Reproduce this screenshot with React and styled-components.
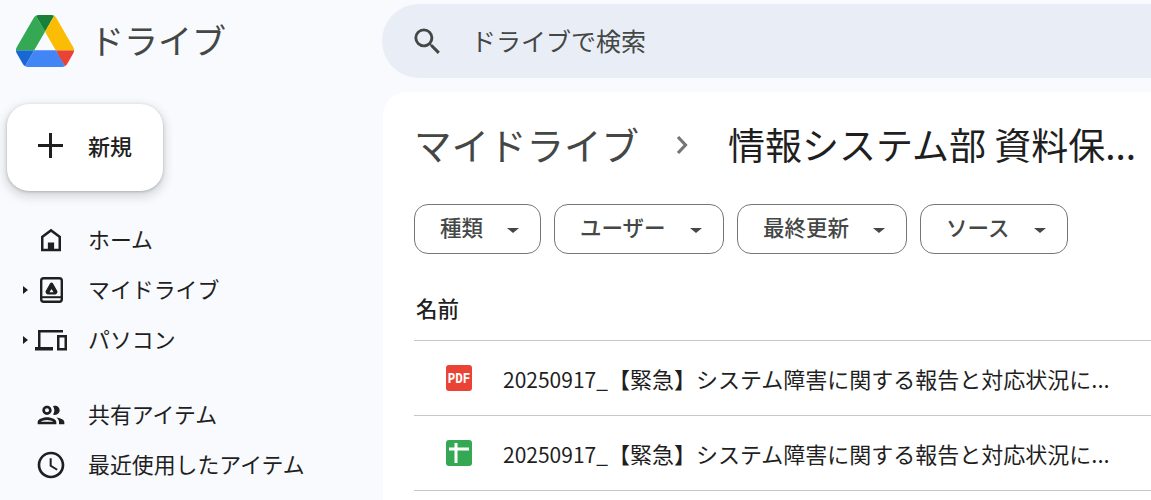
import React from 'react';
import styled, { createGlobalStyle } from 'styled-components';

const GlobalStyle = createGlobalStyle`
  html, body {
    margin: 0;
    height: 500px;
    overflow: hidden;
    background: #f8fafd;
    font-family: "Noto Sans CJK JP", "Roboto", sans-serif;
    color: #1f1f1f;
  }
`;

const Page = styled.div`
  width: 1151px;
  height: 500px;
  overflow: hidden;
  display: grid;
  grid-template-columns: 383px 1fr;
  grid-template-rows: 92px 1fr;
  background: #f8fafd;
`;

const Brand = styled.div`
  display: flex;
  align-items: center;
  height: 82px;
  padding-left: 15px;
  gap: 15px;
  font-size: 34px;
  color: #444746;
`;

const BrandName = styled.span`
  margin-top: -3px;
`;

const SearchArea = styled.div`
  padding-top: 4px;
`;

const SearchBar = styled.div`
  display: flex;
  align-items: center;
  height: 74px;
  margin-left: -1px;
  border-radius: 37px 0 0 37px;
  background: #e9eef6;
  padding-left: 28px;
  gap: 26px;
  font-size: 25px;
  color: #444746;
`;

const SearchLabel = styled.span`
  margin-top: -2px;
`;

const Sidebar = styled.nav`
  padding: 12px 0 0 7px;
`;

const NewButton = styled.div`
  display: flex;
  align-items: center;
  width: 156px;
  height: 87px;
  border-radius: 22px;
  background: #fff;
  box-shadow: 0 1px 3px rgba(60, 64, 67, 0.3), 0 4px 8px 3px rgba(60, 64, 67, 0.15);
  padding-left: 31px;
  box-sizing: border-box;
  gap: 25px;
  font-size: 22px;
  font-weight: 500;
  margin-bottom: 24px;
`;

const NewLabel = styled.span`
  margin-top: -6px;
`;

const PlusGlyph = styled.svg`
  margin-top: -4px;
  fill: #1f1f1f;
`;

const NavGroup = styled.div`
  margin-bottom: ${p => p.$gap || 0}px;
`;

const NavRow = styled.div`
  position: relative;
  display: flex;
  align-items: center;
  height: 50px;
  padding-left: 28px;
  gap: 21px;
  font-size: 21.9px;
`;

const NavLabel = styled.span`
  margin-top: -4px;
`;

const Caret = styled.span`
  position: absolute;
  left: 16px;
  top: 21px;
  border-left: 5px solid #1f1f1f;
  border-top: 4.5px solid transparent;
  border-bottom: 4.5px solid transparent;
`;

const IconSlot = styled.span`
  width: 32px;
  height: 32px;
  display: flex;
  align-items: center;
  justify-content: center;
  flex: none;
`;

const Content = styled.main`
  background: #fff;
  border-radius: 24px 0 0 0;
  padding-left: 31px;
  overflow: hidden;
`;

const Breadcrumb = styled.div`
  display: flex;
  align-items: center;
  height: 53px;
  margin-top: 25px;
  font-size: 37px;
  white-space: nowrap;
`;

const Crumb = styled.span`
  color: #444746;
  font-size: 37.5px;
`;

const Current = styled.span`
  color: #1f1f1f;
`;

const Chevron = styled.span`
  width: 92px;
  margin-left: -3px;
  display: flex;
  justify-content: center;
  flex: none;
  margin-top: 3px;
`;

const Filters = styled.div`
  display: flex;
  gap: 13px;
  margin-top: 34px;
`;

const Chip = styled.div`
  display: flex;
  align-items: center;
  justify-content: space-between;
  box-sizing: border-box;
  width: ${p => p.$w}px;
  height: 50px;
  border: 1px solid #747775;
  border-radius: 14px;
  padding: 0 21px 0 25px;
  font-size: 21.5px;
  font-weight: 500;
  color: #444746;
`;

const ChipLabel = styled.span`
  margin-top: -5px;
`;

const Arrow = styled.span`
  border-top: 5.5px solid #444746;
  border-left: 6.5px solid transparent;
  border-right: 6.5px solid transparent;
  margin-top: 2px;
`;

const ListHeader = styled.div`
  display: flex;
  align-items: center;
  height: 87px;
  box-sizing: border-box;
  padding: 20px 0 0 2px;
  font-size: 21.5px;
  font-weight: 500;
  border-bottom: 1px solid #c7c7c7;
`;

const FileRow = styled.div`
  display: flex;
  align-items: center;
  height: 75px;
  box-sizing: border-box;
  padding-left: 32px;
  gap: 31px;
  font-size: 22px;
  border-bottom: 1px solid #c7c7c7;
  white-space: nowrap;
`;

const FileStamp = styled.span`
  font-size: 21px;
`;

const DriveLogo = () => (
  <svg width="60" height="52" viewBox="0 0 87.3 78">
    <path d="m6.6 66.85 3.85 6.65c.8 1.4 1.95 2.5 3.3 3.3l13.75-23.8h-27.5c0 1.55.4 3.1 1.2 4.5z" fill="#1967d2" />
    <path d="m43.65 25-13.75-23.8c-1.35.8-2.5 1.9-3.3 3.3l-25.4 44a9.06 9.06 0 0 0 -1.2 4.5h27.5z" fill="#34a853" />
    <path d="m73.55 76.8c1.35-.8 2.5-1.9 3.3-3.3l1.6-2.75 7.65-13.25c.8-1.4 1.2-2.95 1.2-4.5h-27.502l5.852 11.5z" fill="#ea4335" />
    <path d="m43.65 25 13.75-23.8c-1.35-.8-2.9-1.2-4.5-1.2h-18.5c-1.6 0-3.15.45-4.5 1.2z" fill="#188038" />
    <path d="m59.8 53h-32.3l-13.75 23.8c1.35.8 2.9 1.2 4.5 1.2h50.8c1.6 0 3.15-.45 4.5-1.2z" fill="#4285f4" />
    <path d="m73.4 26.5-12.7-22c-.8-1.4-1.95-2.5-3.3-3.3l-13.75 23.8 16.15 28h27.45c0-1.55-.4-3.1-1.2-4.5z" fill="#fbbc04" />
  </svg>
);

const SearchIcon = () => (
  <svg width="35" height="35" viewBox="0 0 24 24" fill="#444746">
    <path d="M15.5 14h-.79l-.28-.27A6.47 6.47 0 0 0 16 9.5 6.5 6.5 0 1 0 9.5 16c1.61 0 3.09-.59 4.23-1.57l.27.28v.79l5 4.99L20.49 19l-4.99-5zm-6 0C7.01 14 5 11.99 5 9.5S7.01 5 9.5 5 14 7.01 14 9.5 11.99 14 9.5 14z" />
  </svg>
);

const PlusIcon = () => (
  <PlusGlyph width="25" height="25" viewBox="0 0 25 25">
    <path d="M11 0h3v11h11v3H14v11h-3V14H0v-3h11z" />
  </PlusGlyph>
);

const HomeIcon = () => (
  <svg width="30" height="30" viewBox="0 0 24 24" fill="#1f1f1f">
    <path d="M12 3 4 9v12h16V9l-8-6zm6 16h-3.500v-5h-5v5H6v-9l6-4.500 6 4.500v9z" />
  </svg>
);

const MyDriveIcon = () => (
  <svg width="23" height="26" viewBox="0 0 23 26">
    <rect x="1.2" y="1.200" width="20.600" height="23.600" rx="2.500" fill="none" stroke="#1f1f1f" strokeWidth="2.400" />
    <path d="M1 20.200h21" fill="none" stroke="#1f1f1f" strokeWidth="2" />
    <path fillRule="evenodd" d="M11.500 5.500c.6 0 1.100.3 1.400.8l4.400 7.600c.3.5.3 1.100 0 1.600l-.7 1.200c-.3.500-.8.800-1.400.800H7.800c-.6 0-1.100-.3-1.400-.8l-.7-1.200c-.3-.5-.3-1.100 0-1.600l4.400-7.600c.3-.5.8-.8 1.400-.8zm0 6.500-2 3.200h4z" fill="#1f1f1f" />
  </svg>
);

const ComputerIcon = () => (
  <svg width="32" height="21" viewBox="0 0 32 21" fill="#1f1f1f">
    <path d="M3 0h25v2.400H5.500V17H18v3.500H0V17h3z" />
    <path fillRule="evenodd" d="M22 5h10v15.500H22zm2.500 2.500v10.500h5V7.500z" />
  </svg>
);

const PeopleIcon = () => (
  <svg width="32" height="32" viewBox="0 0 24 24" fill="#1f1f1f">
    <path d="M9 13.750c-2.340 0-7 1.170-7 3.500V19h14v-1.750c0-2.330-4.660-3.500-7-3.500zM4.340 17c.84-.58 2.870-1.250 4.660-1.250s3.820.67 4.660 1.250H4.340zM9 12c1.930 0 3.500-1.570 3.500-3.500S10.930 5 9 5 5.500 6.570 5.500 8.500 7.070 12 9 12zm0-5c.83 0 1.500.67 1.500 1.500S9.830 10 9 10s-1.500-.67-1.500-1.500S8.170 7 9 7zm7.040 6.810c1.160.84 1.960 1.960 1.960 3.440V19h4v-1.750c0-2.020-3.500-3.170-5.960-3.440zM15 12c1.930 0 3.500-1.570 3.500-3.500S16.930 5 15 5c-.54 0-1.040.13-1.500.35.63.89 1 1.980 1 3.150s-.37 2.260-1 3.150c.46.22.96.35 1.500.35z" />
  </svg>
);

const ClockIcon = () => (
  <svg width="32" height="32" viewBox="0 0 24 24" fill="#1f1f1f">
    <path d="M11.990 2C6.470 2 2 6.480 2 12s4.470 10 9.990 10C17.520 22 22 17.520 22 12S17.520 2 11.990 2zM12 20c-4.420 0-8-3.580-8-8s3.580-8 8-8 8 3.580 8 8-3.580 8-8 8zm.5-13H11v6l5.250 3.150.75-1.230-4.500-2.670z" />
  </svg>
);

const ChevronIcon = () => (
  <svg width="12" height="20" viewBox="0 0 12 20">
    <path d="M2 2l7.500 8L2 18" fill="none" stroke="#757575" strokeWidth="3.200" />
  </svg>
);

const PdfIcon = () => (
  <svg width="26" height="26" viewBox="0 0 26 26">
    <rect width="26" height="26" rx="3" fill="#ea4335" />
    <text transform="translate(13 17.500) scale(1 1.150)" textAnchor="middle" fontSize="12.500" fontWeight="700" fill="#fff" fontFamily="Liberation Mono, monospace">PDF</text>
  </svg>
);

const SheetIcon = () => (
  <svg width="26" height="26" viewBox="0 0 26 26">
    <rect width="26" height="26" rx="3" fill="#34a853" />
    <path d="M8.500 3h3v4.500H23v3H11.500V23h-3V10.500H3v-3h5.500z" fill="#fff" />
  </svg>
);

const filters = [
  { label: '種類', w: 127 },
  { label: 'ユーザー', w: 170 },
  { label: '最終更新', w: 170 },
  { label: 'ソース', w: 148 },
];

const files = [
  { id: 'pdf', icon: <PdfIcon /> },
  { id: 'sheet', icon: <SheetIcon /> },
];

export default function App() {
  return (
    <Page>
      <GlobalStyle />
      <Brand>
        <DriveLogo />
        <BrandName>ドライブ</BrandName>
      </Brand>
      <SearchArea>
        <SearchBar>
          <SearchIcon />
          <SearchLabel>ドライブで検索</SearchLabel>
        </SearchBar>
      </SearchArea>
      <Sidebar>
        <NewButton>
          <PlusIcon />
          <NewLabel>新規</NewLabel>
        </NewButton>
        <NavGroup $gap={25}>
          <NavRow><IconSlot><HomeIcon /></IconSlot><NavLabel>ホーム</NavLabel></NavRow>
          <NavRow><Caret /><IconSlot><MyDriveIcon /></IconSlot><NavLabel>マイドライブ</NavLabel></NavRow>
          <NavRow><Caret /><IconSlot><ComputerIcon /></IconSlot><NavLabel>パソコン</NavLabel></NavRow>
        </NavGroup>
        <NavGroup>
          <NavRow><IconSlot><PeopleIcon /></IconSlot><NavLabel>共有アイテム</NavLabel></NavRow>
          <NavRow><IconSlot><ClockIcon /></IconSlot><NavLabel>最近使用したアイテム</NavLabel></NavRow>
        </NavGroup>
      </Sidebar>
      <Content>
        <Breadcrumb>
          <Crumb>マイドライブ</Crumb>
          <Chevron><ChevronIcon /></Chevron>
          <Current>情報システム部 資料保...</Current>
        </Breadcrumb>
        <Filters>
          {filters.map(f => (
            <Chip key={f.label} $w={f.w}>
              <ChipLabel>{f.label}</ChipLabel>
              <Arrow />
            </Chip>
          ))}
        </Filters>
        <ListHeader>名前</ListHeader>
        {files.map(f => (
          <FileRow key={f.id}>
            {f.icon}
            <span><FileStamp>20250917_</FileStamp>【緊急】システム障害に関する報告と対応状況に...</span>
          </FileRow>
        ))}
      </Content>
    </Page>
  );
}
